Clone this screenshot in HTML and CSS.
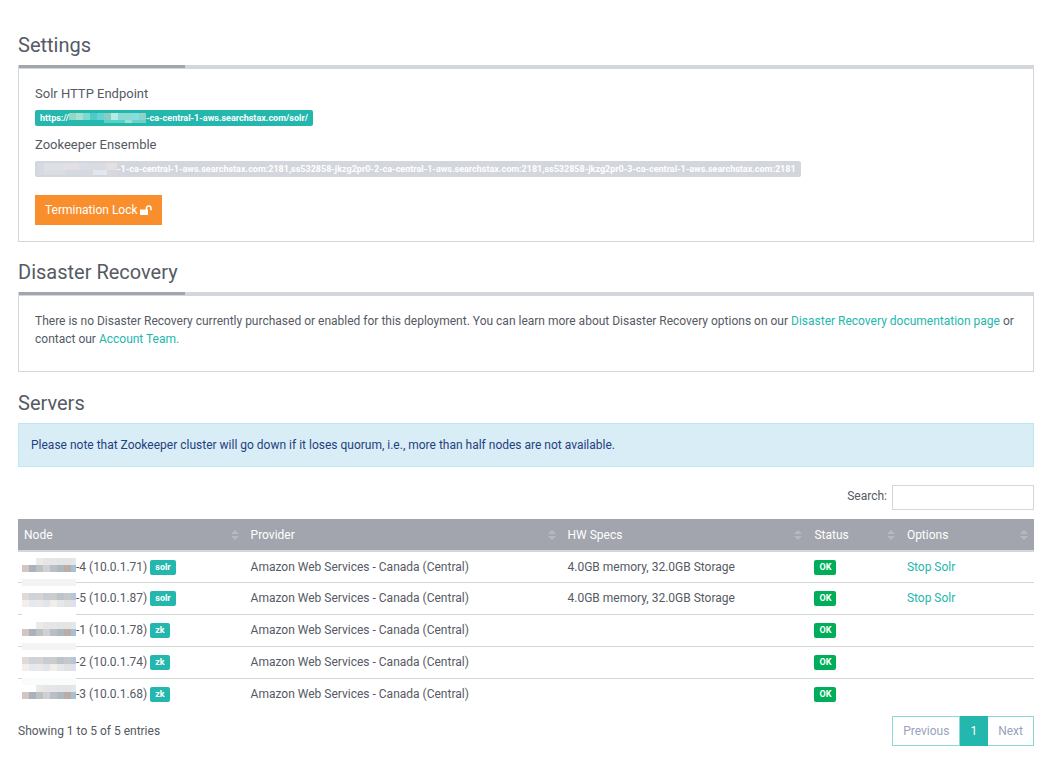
FILE: index.html
```html
<!DOCTYPE html>
<html lang="en">
<head>
<meta charset="utf-8">
<title>Deployment</title>
<link rel="stylesheet" href="styles.css">
</head>
<body>
<main class="page">
  <section>
    <h2 class="title">Settings</h2>
    <div class="panel settings">
      <h3 class="subtitle">Solr HTTP Endpoint</h3>
      <div class="label-row"><span class="label endpoint">https://<svg class="mask" width="77" height="10" shape-rendering="crispEdges" aria-hidden="true"><rect width="77" height="10" fill="#6fd0ca"/><rect width="7" height="7" fill="#8fd9c8"/><rect x="7" width="7" height="7" fill="#a8e0d0"/><rect x="14" width="7" height="7" fill="#7bdad2"/><rect x="21" width="7" height="7" fill="#4fcac4"/><rect x="28" width="7" height="7" fill="#61d3d6"/><rect x="35" width="7" height="7" fill="#86cec4"/><rect x="42" width="7" height="7" fill="#b5ece6"/><rect x="49" width="14" height="7" fill="#8adbd5"/><rect x="63" width="7" height="7" fill="#84dfe2"/><rect x="70" width="7" height="7" fill="#8fd2c8"/><rect y="7" width="35" height="3" fill="#27b9ae"/><rect x="35" y="7" width="21" height="3" fill="#5bd0c4"/><rect x="56" y="7" width="7" height="3" fill="#a1dfd0"/></svg>-ca-central-1-aws.searchstax.com/solr/</span></div>
      <h3 class="subtitle">Zookeeper Ensemble</h3>
      <div class="label-row"><span class="label muted"><svg class="mask" width="80" height="12" shape-rendering="crispEdges" aria-hidden="true"><rect width="80" height="12" fill="#d6dae0"/><rect x="7" width="28" height="7" fill="#dde1e7"/><rect x="28" width="14" height="7" fill="#e2e0e2"/><rect x="42" width="7" height="7" fill="#d9dde8"/><rect x="49" width="21" height="7" fill="#dadce1"/><rect x="70" width="10" height="7" fill="#e3e0df"/><rect x="7" y="7" width="21" height="5" fill="#dadee2"/><rect x="56" y="7" width="14" height="5" fill="#e2e7eb"/></svg>-1-ca-central-1-aws.searchstax.com:2181,ss532858-jkzg2pr0-2-ca-central-1-aws.searchstax.com:2181,ss532858-jkzg2pr0-3-ca-central-1-aws.searchstax.com:2181</span></div>
      <button class="lock-btn" type="button">Termination Lock
        <svg width="12" height="10" viewBox="0 0 12 10" aria-hidden="true"><path d="M0 4.5h8V10H0z" fill="#fff"/><path d="M6.5 5V3.2a2.2 2.2 0 0 1 4.5 0v2" fill="none" stroke="#fff" stroke-width="1.6"/></svg>
      </button>
    </div>
  </section>

  <section>
    <h2 class="title">Disaster Recovery</h2>
    <div class="panel recovery">
      <p>There is no Disaster Recovery currently purchased or enabled for this deployment. You can learn more about Disaster Recovery options on our <a href="#">Disaster Recovery documentation page</a> or contact our <a href="#">Account Team.</a></p>
    </div>
  </section>

  <section>
    <h2 class="title servers-title">Servers</h2>
    <div class="alert">Please note that Zookeeper cluster will go down if it loses quorum, i.e., more than half nodes are not available.</div>
    <div class="search"><label for="search">Search:</label><input id="search" type="text"></div>
    <div class="table-wrap">
      <table class="servers">
        <thead>
          <tr>
            <th class="c-node"><div class="head">Node<svg class="sort" width="8" height="10" aria-hidden="true"><path d="M0 4 4 0l4 4zM0 6h8l-4 4z"/></svg></div></th>
            <th class="c-provider"><div class="head">Provider<svg class="sort" width="8" height="10" aria-hidden="true"><path d="M0 4 4 0l4 4zM0 6h8l-4 4z"/></svg></div></th>
            <th class="c-specs"><div class="head">HW Specs<svg class="sort" width="8" height="10" aria-hidden="true"><path d="M0 4 4 0l4 4zM0 6h8l-4 4z"/></svg></div></th>
            <th class="c-status"><div class="head">Status<svg class="sort" width="8" height="10" aria-hidden="true"><path d="M0 4 4 0l4 4zM0 6h8l-4 4z"/></svg></div></th>
            <th class="c-options"><div class="head">Options<svg class="sort" width="8" height="10" aria-hidden="true"><path d="M0 4 4 0l4 4zM0 6h8l-4 4z"/></svg></div></th>
          </tr>
        </thead>
        <tbody>
          <tr><td class="node">-4 (10.0.1.71) <span class="badge">solr</span></td><td>Amazon Web Services - Canada (Central)</td><td>4.0GB memory, 32.0GB Storage</td><td><span class="badge ok">OK</span></td><td><a href="#">Stop Solr</a></td></tr>
          <tr><td class="node">-5 (10.0.1.87) <span class="badge">solr</span></td><td>Amazon Web Services - Canada (Central)</td><td>4.0GB memory, 32.0GB Storage</td><td><span class="badge ok">OK</span></td><td><a href="#">Stop Solr</a></td></tr>
          <tr><td class="node">-1 (10.0.1.78) <span class="badge">zk</span></td><td>Amazon Web Services - Canada (Central)</td><td></td><td><span class="badge ok">OK</span></td><td></td></tr>
          <tr><td class="node">-2 (10.0.1.74) <span class="badge">zk</span></td><td>Amazon Web Services - Canada (Central)</td><td></td><td><span class="badge ok">OK</span></td><td></td></tr>
          <tr><td class="node">-3 (10.0.1.68) <span class="badge">zk</span></td><td>Amazon Web Services - Canada (Central)</td><td></td><td><span class="badge ok">OK</span></td><td></td></tr>
        </tbody>
      </table>
      <!-- Pixelated cover over the node names -->
      <svg class="redaction" width="54" height="141" shape-rendering="crispEdges" aria-hidden="true">
        <defs>
          <g id="strong"><rect width="7" height="7" fill="#d3c5bf"/><rect x="7" width="7" height="7" fill="#a9b1be"/><rect x="14" width="7" height="7" fill="#bfc0c0"/><rect x="21" width="7" height="7" fill="#cfd0d6"/><rect x="28" width="7" height="7" fill="#babfc3"/><rect x="35" width="7" height="7" fill="#adb8bf"/><rect x="42" width="7" height="7" fill="#b8ada8"/><rect x="49" width="5" height="7" fill="#aac0d0"/></g>
          <g id="faint"><rect x="14" width="7" height="7" fill="#e9ebea"/><rect x="21" width="14" height="7" fill="#e6e6e9"/><rect x="35" width="7" height="7" fill="#e3e4e6"/><rect x="42" width="7" height="7" fill="#e4e4e5"/><rect x="49" width="5" height="7" fill="#e0e7ed"/></g>
          <g id="medium"><rect width="7" height="7" fill="#dedad6"/><rect x="7" width="7" height="7" fill="#cfd2d9"/><rect x="14" width="7" height="7" fill="#d5d4d2"/><rect x="21" width="7" height="7" fill="#c8cbd1"/><rect x="28" width="7" height="7" fill="#cacccd"/><rect x="35" width="7" height="7" fill="#bec3c7"/><rect x="42" width="7" height="7" fill="#c5c7ca"/><rect x="49" width="5" height="7" fill="#b5c7d6"/><rect y="7" width="7" height="7" fill="#f3edeb"/><rect x="7" y="7" width="7" height="7" fill="#e5e8ec"/><rect x="14" y="7" width="7" height="7" fill="#e8e9eb"/><rect x="21" y="7" width="7" height="7" fill="#e2e5e8"/><rect x="28" y="7" width="7" height="7" fill="#f0edeb"/><rect x="35" y="7" width="7" height="7" fill="#e6e7ea"/><rect x="42" y="7" width="7" height="7" fill="#e2e2e3"/><rect x="49" y="7" width="5" height="7" fill="#dee1ed"/></g>
        </defs>
        <use href="#faint"/><use href="#strong" y="7"/>
        <rect y="21" width="54" height="7" fill="#f3f3f6"/>
        <use href="#medium" y="35"/>
        <rect y="56" width="54" height="8" fill="#fff"/>
        <use href="#faint" y="64"/><use href="#strong" y="71"/>
        <rect y="85" width="54" height="7" fill="#f3f4f6"/>
        <use href="#medium" y="99"/>
        <rect y="120" width="54" height="7" fill="#fafcfc"/>
        <use href="#faint" y="127"/><use href="#strong" y="134"/>
      </svg>
    </div>
    <div class="footer">
      <span class="info">Showing 1 to 5 of 5 entries</span>
      <nav class="pager"><a href="#">Previous</a><a class="active" href="#">1</a><a href="#">Next</a></nav>
    </div>
  </section>
</main>
</body>
</html>
```
FILE: styles.css
```css
* { box-sizing: border-box; }
body {
  margin: 0;
  background: #fff;
  color: #555a64;
  font: 12px/18px Roboto, "Liberation Sans", sans-serif;
}
a { color: #23b7ad; text-decoration: none; }
.page { padding: 32px 7px 16px 18px; }
.title {
  margin: 0 0 7px;
  font-size: 20px;
  font-weight: 400;
  line-height: 26px;
}
.panel {
  position: relative;
  margin-bottom: 17px;
  padding: 16px;
  border: 1px solid #d3d6db;
  border-top-width: 4px;
}
.panel::before {
  content: "";
  position: absolute;
  top: -4px;
  left: 0;
  width: 166px;
  height: 3px;
  background: #a2a5ad;
}
.recovery { padding-bottom: 23px; margin-bottom: 18px; }
.recovery p { margin: 0; }
.subtitle {
  margin: 0 0 8px;
  font-size: 13px;
  font-weight: 400;
  line-height: 17px;
}
.label-row { display: flex; margin-bottom: 10px; }
.label {
  display: flex;
  align-items: center;
  height: 16px;
  padding: 0 5px;
  border-radius: 2px;
  background: #23b7ad;
  color: #fff;
  font-size: 9px;
  font-weight: 700;
  line-height: 16px;
  white-space: nowrap;
}
.muted { padding-left: 2px; margin-bottom: 8px; background: #d3d6dc; }
.mask { flex: none; }
.lock-btn {
  display: flex;
  align-items: center;
  gap: 2px;
  height: 30px;
  padding: 0 10px;
  border: 0;
  background: #f98e2d;
  color: #fff;
  font: inherit;
}
.alert {
  padding: 12px;
  border: 1px solid #bce8f1;
  background: #d9edf7;
  color: #1f427e;
}
.search {
  display: flex;
  justify-content: flex-end;
  gap: 5px;
  margin: 18px 0 9px;
  line-height: 22px;
}
.search input {
  width: 142px;
  height: 25px;
  padding: 0 5px;
  border: 1px solid #d3d6db;
  background: #fff;
  font: inherit;
}
.table-wrap { position: relative; }
.servers { width: 100%; border-collapse: collapse; table-layout: fixed; }
.servers th {
  height: 32px;
  padding: 0 6px;
  border-bottom: 2px solid #d3d6db;
  background: #a2a5ad;
  color: #fff;
  font-weight: 400;
  text-align: left;
}
.c-node { width: 22.3%; }
.c-provider { width: 31.2%; }
.c-specs { width: 24.3%; }
.c-status { width: 9.1%; }
.head { display: flex; align-items: center; justify-content: space-between; }
.sort { fill: #b6b9bf; }
.servers td { height: 32px; padding: 0 6px; border-top: 1px solid #d3d6db; }
.servers tbody tr:first-child td { height: 31px; border-top: 0; }
.servers .node { padding-left: 58px; white-space: nowrap; }
.badge {
  display: inline-block;
  height: 15px;
  padding: 0 5px;
  border-radius: 2px;
  background: #23b7ad;
  color: #fff;
  font-size: 9px;
  font-weight: 700;
  line-height: 15px;
  vertical-align: 1px;
}
.ok { background: #00ae5a; }
.redaction { position: absolute; left: 4px; top: 39px; }
.footer { display: flex; justify-content: space-between; padding-top: 6px; }
.info { padding-top: 6px; }
.pager { display: flex; }
.pager a {
  padding: 5px 10px;
  border: 1px solid #8cd9d2;
  color: #97a3bd;
}
.pager a + a { border-left: 0; }
.pager .active { border-color: #23b7ad; background: #23b7ad; color: #fff; }
```
